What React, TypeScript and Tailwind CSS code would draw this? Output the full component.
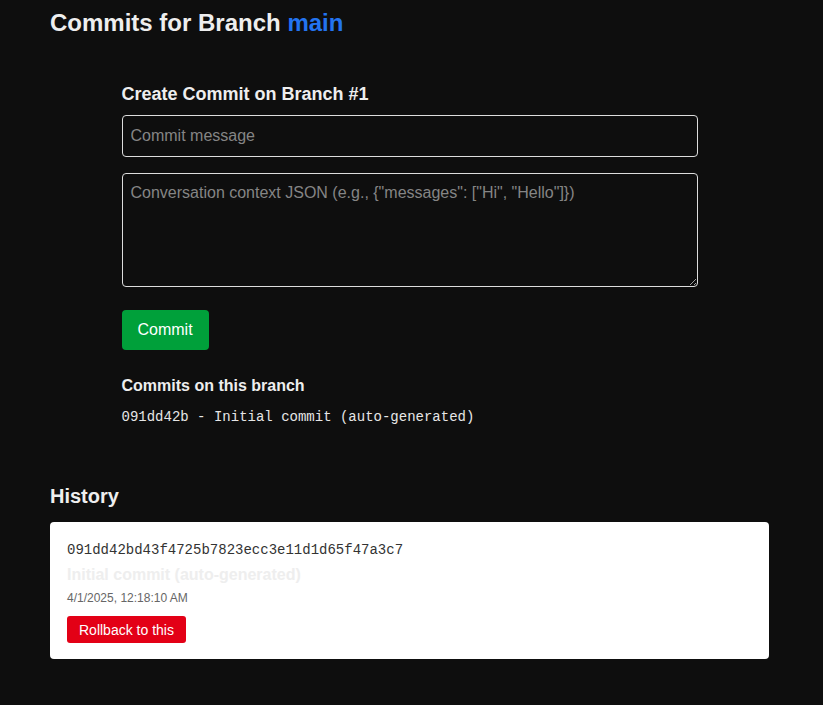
import { useState } from "react";

type Commit = {
  hash: string;
  message: string;
  date: string;
};

const commits: Commit[] = [
  {
    hash: "091dd42bd43f4725b7823ecc3e11d1d65f47a3c7",
    message: "Initial commit (auto-generated)",
    date: "4/1/2025, 12:18:10 AM",
  },
];

export default function App() {
  const [message, setMessage] = useState("");
  const [context, setContext] = useState("");

  return (
    <div className="min-h-screen bg-[#0e0e0e] text-[#eeeeee] font-['Liberation_Sans',Arial,sans-serif]">
      <div className="w-[719px] ml-[50px] pb-10">
        <h1 className="text-2xl font-bold leading-none pt-[11px]">
          Commits for Branch <span className="text-[#2374f0]">main</span>
        </h1>

        <div className="w-[576px] mx-auto mt-[50px]">
          <h3 className="text-[18px] font-bold leading-none">Create Commit on Branch #1</h3>
          <input
            value={message}
            onChange={(e) => setMessage(e.target.value)}
            placeholder="Commit message"
            className="block w-full h-[42px] mt-[12px] px-2 bg-transparent border border-[#dddddd] rounded text-base text-[#eeeeee] placeholder:text-[#858585] outline-none"
          />
          <textarea
            value={context}
            onChange={(e) => setContext(e.target.value)}
            placeholder={'Conversation context JSON (e.g., {"messages": ["Hi", "Hello"]})'}
            className="block w-full h-[114px] mt-4 px-2 py-[7px] bg-transparent border border-[#dddddd] rounded text-base text-[#eeeeee] placeholder:text-[#858585] outline-none"
          />
          <button className="mt-[23px] h-[40px] px-4 bg-[#00a03a] rounded text-white text-base">
            Commit
          </button>

          <h4 className="mt-[28px] text-base font-bold leading-none">Commits on this branch</h4>
          <div className="mt-[13px] font-['Liberation_Mono',monospace] text-sm text-[#e6e6e6]">
            {commits.map((c) => (
              <div key={c.hash}>
                {c.hash.slice(0, 8)} - {c.message}
              </div>
            ))}
          </div>
        </div>

        <h2 className="mt-[59px] text-[20px] font-bold leading-none">History</h2>
        <div className="mt-[16px]">
          {commits.map((c) => (
            <div key={c.hash} className="bg-white rounded px-[17px] pt-[18px] pb-[16px]">
              <div className="font-['Liberation_Mono',monospace] text-sm text-[#333333]">{c.hash}</div>
              <div className="text-base font-bold text-[#eeeeee] mt-[3px]">{c.message}</div>
              <div className="text-xs text-[#666666] mt-[3px]">{c.date}</div>
              <button className="mt-[10px] h-[27px] px-3 bg-[#e30016] rounded-[3px] text-white text-sm">
                Rollback to this
              </button>
            </div>
          ))}
        </div>
      </div>
    </div>
  );
}
